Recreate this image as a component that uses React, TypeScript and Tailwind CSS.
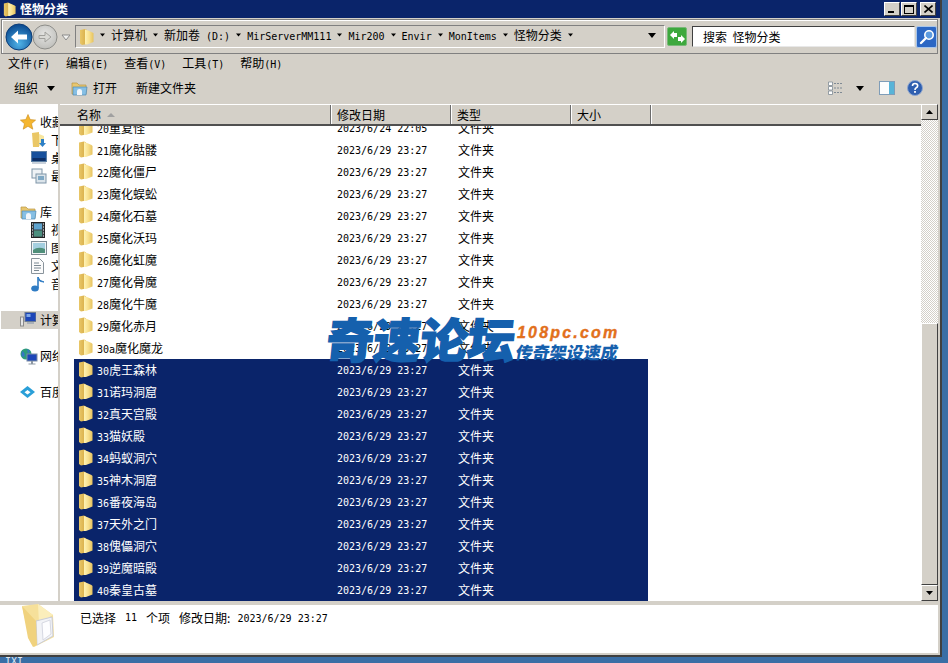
import React from "react";

const mono = "font-['DejaVu_Sans_Mono','Liberation_Mono',monospace] text-[10px]";

function T({ s }: { s: string }) {
  const parts = s.split(/([\x00-\x7f]+)/).filter(Boolean);
  return (
    <span className="whitespace-pre">
      {parts.map((p, i) =>
        /^[\x00-\x7f]+$/.test(p) ? (
          <span key={i} className={mono}>{p}</span>
        ) : (
          <span key={i}>{p}</span>
        )
      )}
    </span>
  );
}

function Folder({ w = 15, h = 17 }: { w?: number; h?: number }) {
  return (
    <svg width={w} height={h} viewBox="0 0 15 17" className="shrink-0">
      <defs>
        <linearGradient id="fg" x1="0" x2="1" y1="0" y2="0">
          <stop offset="0" stopColor="#fff3b4" />
          <stop offset="0.5" stopColor="#f8e08e" />
          <stop offset="1" stopColor="#e6c25e" />
        </linearGradient>
        <linearGradient id="fl" x1="0" x2="1" y1="0" y2="0">
          <stop offset="0" stopColor="#e9c768" />
          <stop offset="1" stopColor="#d6ab45" />
        </linearGradient>
      </defs>
      <path d="M1 1.5 L6 0.5 L8 1.5 L8 15.5 L3 16.5 L1 15 Z" fill="url(#fl)" />
      <path d="M6 1 L9 2 L13.5 4 L14.5 5 L14.5 13.5 L8 16 L6 16 Z" fill="url(#fg)" />
    </svg>
  );
}

function Arrow({ c = "#000" }: { c?: string }) {
  return (
    <svg width="5" height="4" viewBox="0 0 5 4" className="shrink-0">
      <path d="M0 0.5 H5 L2.5 3.5 Z" fill={c} />
    </svg>
  );
}

function Star() {
  return (
    <svg width="16" height="16" viewBox="0 0 16 16">
      <path d="M8 0.5 L10.2 5.6 L15.6 6.1 L11.5 9.7 L12.8 15.2 L8 12.3 L3.2 15.2 L4.5 9.7 L0.4 6.1 L5.8 5.6 Z" fill="#f5b62f" stroke="#c98a1a" strokeWidth="0.6" />
    </svg>
  );
}

function LibFolder() {
  return (
    <svg width="17" height="15" viewBox="0 0 17 15">
      <path d="M1 2 H6 L8 4 H15 V13 H1 Z" fill="#e8c66e" stroke="#b99642" strokeWidth="0.7" />
      <path d="M2 6 H16 L15 14 H2 Z" fill="#86bfe4" stroke="#4e89b5" strokeWidth="0.7" />
      <path d="M6 14 V10 Q6 8 8.5 8 Q11 8 11 10 V14" fill="#f2f6fa" />
    </svg>
  );
}

const sideIcons: Record<string, React.ReactNode> = {
  down: (
    <svg width="15" height="16" viewBox="0 0 15 16">
      <path d="M1 1 L8 0 V15 L2 15 Z" fill="#eac766" />
      <path d="M8 2 L13 4 V12 L8 14 Z" fill="#f7e6a0" />
      <path d="M10 7 H13 V11 H15 L11.5 15 L8 11 H10 Z" fill="#2d7fc6" />
    </svg>
  ),
  desk: (
    <svg width="16" height="14" viewBox="0 0 16 14">
      <rect x="0.5" y="0.5" width="15" height="10" fill="#17509c" stroke="#5c7fa3" />
      <rect x="1.5" y="7" width="13" height="3" fill="#0d2f66" />
      <rect x="1" y="11" width="14" height="2" fill="#c9d2dc" />
    </svg>
  ),
  recent: (
    <svg width="16" height="16" viewBox="0 0 16 16">
      <rect x="1" y="1" width="10" height="9" fill="#eef2f5" stroke="#7f95a8" />
      <rect x="5" y="6" width="10" height="9" fill="#dbe4ea" stroke="#7f95a8" />
      <rect x="7" y="8" width="6" height="4" fill="#7fa8c4" />
    </svg>
  ),
  video: (
    <svg width="14" height="16" viewBox="0 0 14 16">
      <rect x="0.5" y="0.5" width="13" height="15" fill="#3a4248" stroke="#222" />
      <rect x="3" y="1.5" width="8" height="6" fill="#5fa4cf" />
      <rect x="3" y="8.5" width="8" height="6" fill="#4b8f7e" />
      <path d="M1 2 H2 M1 5 H2 M1 8 H2 M1 11 H2 M1 14 H2 M12 2 H13 M12 5 H13 M12 8 H13 M12 11 H13 M12 14 H13" stroke="#fff" />
    </svg>
  ),
  pic: (
    <svg width="16" height="14" viewBox="0 0 16 14">
      <rect x="0.5" y="0.5" width="15" height="13" fill="#f1f4f6" stroke="#7d8b94" />
      <rect x="2" y="2" width="12" height="10" fill="#a4cfe0" />
      <path d="M2 9 Q7 5 14 8 V12 H2 Z" fill="#4f8f7a" />
    </svg>
  ),
  doc: (
    <svg width="13" height="16" viewBox="0 0 13 16">
      <path d="M0.5 0.5 H8.5 L12.5 4.5 V15.5 H0.5 Z" fill="#fbfbfb" stroke="#8a949c" />
      <path d="M3 5 H8 M3 7.5 H10 M3 10 H10 M3 12.5 H8" stroke="#7b8892" />
    </svg>
  ),
  music: (
    <svg width="14" height="16" viewBox="0 0 14 16">
      <path d="M7 1 V12" stroke="#2f7cc4" strokeWidth="1.6" />
      <path d="M7 1 Q8 5 13 6 Q9 6 7.5 4" fill="#2f7cc4" stroke="#2f7cc4" />
      <ellipse cx="4" cy="12.5" rx="3.8" ry="3" fill="#2f7cc4" />
    </svg>
  ),
  pc: (
    <svg width="16" height="16" viewBox="0 0 16 16">
      <rect x="0.5" y="5" width="3" height="9" fill="#e5e5e5" stroke="#8b8b8b" />
      <rect x="5" y="0.5" width="11" height="9" fill="#1d46b8" stroke="#6e7d93" />
      <rect x="6.5" y="2" width="4" height="3" fill="#7fa7e8" />
      <rect x="7" y="10" width="7" height="2" fill="#a9b0b8" />
    </svg>
  ),
  net: (
    <svg width="18" height="17" viewBox="0 0 18 17">
      <circle cx="6" cy="6" r="5.5" fill="#2d9b7a" />
      <path d="M2 3 Q6 5 4 9 L1.5 8 Z M7 1 L10 3 L8 6 Z" fill="#3577c4" />
      <rect x="7" y="6" width="10" height="7" fill="#1d46b8" stroke="#7a8ca3" />
      <rect x="11" y="13" width="2" height="3" fill="#8c97a3" />
      <rect x="8.5" y="15.5" width="7" height="1" fill="#8c97a3" />
    </svg>
  ),
  baidu: (
    <svg width="15" height="12" viewBox="0 0 15 12">
      <path d="M7.5 0 L15 6 L7.5 12 L0 6 Z" fill="#2a9fd8" />
      <path d="M7.5 4 L10.5 6.3 L7.5 8.5 L4.5 6.3 Z" fill="#fff" />
    </svg>
  ),
};

const sideRows: (null | { icon: React.ReactNode; label: string; sub?: boolean; active?: boolean })[] = [
  { icon: <Star />, label: "收藏夹" },
  { icon: sideIcons.down, label: "下载", sub: true },
  { icon: sideIcons.desk, label: "桌面", sub: true },
  { icon: sideIcons.recent, label: "最近访问的位置", sub: true },
  null,
  { icon: <LibFolder />, label: "库" },
  { icon: sideIcons.video, label: "视频", sub: true },
  { icon: sideIcons.pic, label: "图片", sub: true },
  { icon: sideIcons.doc, label: "文档", sub: true },
  { icon: sideIcons.music, label: "音乐", sub: true },
  null,
  { icon: sideIcons.pc, label: "计算机", active: true },
  null,
  { icon: sideIcons.net, label: "网络" },
  null,
  { icon: sideIcons.baidu, label: "百度网盘" },
];

const rows = [
  ["20重复怪", "2023/6/24 22:05"],
  ["21魔化骷髅"],
  ["22魔化僵尸"],
  ["23魔化蜈蚣"],
  ["24魔化石墓"],
  ["25魔化沃玛"],
  ["26魔化虹魔"],
  ["27魔化骨魔"],
  ["28魔化牛魔"],
  ["29魔化赤月"],
  ["30a魔化魔龙"],
  ["30虎王森林"],
  ["31诺玛洞窟"],
  ["32真天宫殿"],
  ["33猫妖殿"],
  ["34蚂蚁洞穴"],
  ["35神木洞窟"],
  ["36番夜海岛"],
  ["37天外之门"],
  ["38傀儡洞穴"],
  ["39逆魔暗殿"],
  ["40秦皇古墓"],
];

const crumbs = ["计算机", "新加卷", "(D:)", "MirServerMM111", "Mir200", "Envir", "MonItems", "怪物分类"];

function WinBtn({ children }: { children: React.ReactNode }) {
  return (
    <div className="w-[16px] h-[14px] bg-[#d4d0c8] border-t border-l border-t-white border-l-white border-r border-b border-r-[#404040] border-b-[#404040] flex items-center justify-center">
      {children}
    </div>
  );
}

function HeadCell({ w, children }: { w: string; children: React.ReactNode }) {
  return (
    <div className={`${w} shrink-0 h-full flex items-center border-r border-r-[#6b6b6b] shadow-[1px_0_0_#fff]`}>
      {children}
    </div>
  );
}

function ScrollBtn({ up }: { up?: boolean }) {
  return (
    <div className="h-[16px] shrink-0 bg-[#d4d0c8] border-t border-l border-t-white border-l-white border-r border-b border-r-[#404040] border-b-[#404040] flex items-center justify-center">
      <svg width="7" height="4" viewBox="0 0 7 4">
        <path d={up ? "M3.5 0 L7 4 H0 Z" : "M0 0 H7 L3.5 4 Z"} fill="#000" />
      </svg>
    </div>
  );
}

export default function App() {
  return (
    <div className="relative w-[948px] h-[663px] overflow-hidden bg-[#3a6ea5] text-[12px] leading-none text-black font-['Noto_Sans_CJK_SC','Liberation_Sans',sans-serif]">
      <div className="w-[942px] h-[657px] flex flex-col bg-[#d4d0c8] border-r-2 border-b-2 border-r-[#404040] border-b-[#404040]">
        {/* title bar */}
        <div className="h-[18px] shrink-0 bg-[#0a246a] flex items-center pl-[3px] pr-[4px]">
          <Folder w={13} h={15} />
          <span className="ml-[4px] text-white font-bold">怪物分类</span>
          <div className="ml-auto flex items-center gap-[1px]">
            <WinBtn>
              <div className="w-[6px] h-[2px] bg-black mt-[6px] -ml-[3px]" />
            </WinBtn>
            <WinBtn>
              <div className="w-[10px] h-[9px] border border-black border-t-2" />
            </WinBtn>
            <div className="w-[1px]" />
            <WinBtn>
              <svg width="9" height="8" viewBox="0 0 9 8">
                <path d="M0.5 0.5 L8.5 7.5 M8.5 0.5 L0.5 7.5" stroke="#000" strokeWidth="1.6" />
              </svg>
            </WinBtn>
          </div>
        </div>

        <div className="w-[940px] flex-1 flex flex-col min-h-0 pr-[2px]">
          {/* address row */}
          <div className="h-[35px] shrink-0 mt-[1px] ml-[1px] border border-[#808080] shadow-[inset_1px_1px_0_#fff] flex items-center pl-[3px]">
            <svg width="68" height="30" viewBox="0 0 68 30" className="shrink-0">
              <defs>
                <radialGradient id="bb" cx="0.5" cy="0.75" r="0.7">
                  <stop offset="0" stopColor="#4fb3e8" />
                  <stop offset="1" stopColor="#0c4d93" />
                </radialGradient>
                <radialGradient id="gb" cx="0.5" cy="0.4" r="0.7">
                  <stop offset="0" stopColor="#e6e6e4" />
                  <stop offset="1" stopColor="#b8b8b4" />
                </radialGradient>
              </defs>
              <circle cx="40" cy="15" r="12" fill="url(#gb)" stroke="#8e8e8a" />
              <path d="M34 13.5 H40 V10 L46 15 L40 20 V16.5 H34 Z" fill="#d9d9d5" stroke="#a0a09c" />
              <circle cx="14" cy="15" r="13" fill="url(#bb)" stroke="#0c3d78" />
              <path d="M6 15 L13 8.5 V12.5 H22 V17.5 H13 V21.5 Z" fill="#fff" />
              <path d="M57 13 H65 L61 18 Z" fill="#f2f2f0" stroke="#8b8b8b" />
            </svg>
            <div className="ml-[2px] w-[590px] h-[23px] border border-[#808080] border-b-white border-r-white flex items-center pl-[3px]">
              <Folder w={15} h={18} />
              <div className="ml-[6px] mb-[3px] flex items-center gap-[6px] flex-1">
                <Arrow />
                {crumbs.map((c) => (
                  <React.Fragment key={c}>
                    <T s={c} />
                    {c !== "新加卷" && <Arrow />}
                  </React.Fragment>
                ))}
                <div className="ml-auto mr-[8px]">
                  <svg width="8" height="5" viewBox="0 0 8 5">
                    <path d="M0 0 H8 L4 5 Z" fill="#000" />
                  </svg>
                </div>
              </div>
            </div>
            <div className="ml-[2px] w-[20px] h-[19px] rounded-[2px] bg-[#3da83d] border border-[#78b878] flex items-center justify-center">
              <svg width="15" height="12" viewBox="0 0 15 12">
                <path d="M0 4 L4 0 V2 H7 V6 H4 V8 Z" fill="#fff" />
                <path d="M15 8 L11 12 V10 H8 V6 H11 V4 Z" fill="#fff" />
              </svg>
            </div>
            <div className="ml-[5px] w-[223px] h-[21px] bg-white border border-t-[#404040] border-l-[#404040] border-r-[#e8e8e8] border-b-[#e8e8e8] flex items-center pl-[10px]">
              <span className="whitespace-pre">搜索  怪物分类</span>
            </div>
            <div className="ml-[1px] w-[21px] h-[22px] rounded-[2px] bg-[#2c67c4] border border-[#a9c6ea] flex items-center justify-center">
              <svg width="16" height="16" viewBox="0 0 16 16">
                <circle cx="10" cy="6" r="4.2" fill="#5d9be0" stroke="#fff" strokeWidth="1.6" />
                <path d="M7 9 L2 14" stroke="#fff" strokeWidth="2.4" strokeLinecap="round" />
              </svg>
            </div>
          </div>

          {/* menu */}
          <div className="h-[21px] -mt-[1px] shrink-0 flex items-center pl-[8px] gap-[16px]">
            {["文件(F)", "编辑(E)", "查看(V)", "工具(T)", "帮助(H)"].map((m) => (
              <T key={m} s={m} />
            ))}
          </div>

          {/* toolbar */}
          <div className="h-[28px] mb-[2px] shrink-0 flex items-center pl-[14px]">
            <span>组织</span>
            <div className="ml-[9px]">
              <svg width="8" height="5" viewBox="0 0 8 5"><path d="M0 0 H8 L4 5 Z" fill="#000" /></svg>
            </div>
            <div className="ml-[16px]"><LibFolder /></div>
            <span className="ml-[5px]">打开</span>
            <span className="ml-[19px]">新建文件夹</span>
            <div className="ml-auto flex items-center">
              <svg width="15" height="14" viewBox="0 0 15 14">
                <path d="M0.5 1 H4.5 V4.5 H0.5 Z M0.5 5.5 H4.5 V9 H0.5 Z M0.5 10 H4.5 V13.5 H0.5 Z" fill="#fff" stroke="#7f8a94" strokeWidth="0.8" />
                <path d="M6 2.5 H15 M6 7 H15 M6 11.5 H15" stroke="#7f8a94" strokeDasharray="2 1" />
              </svg>
              <div className="ml-[13px]">
                <svg width="8" height="5" viewBox="0 0 8 5"><path d="M0 0 H8 L4 5 Z" fill="#000" /></svg>
              </div>
              <div className="ml-[15px]">
                <svg width="16" height="14" viewBox="0 0 16 14">
                  <rect x="0.5" y="0.5" width="15" height="13" fill="#fdfdfd" stroke="#7f9db8" />
                  <rect x="10" y="1" width="5" height="12" fill="#58b4d8" />
                </svg>
              </div>
              <div className="ml-[12px] mr-[15px]">
                <svg width="16" height="16" viewBox="0 0 16 16">
                  <circle cx="8" cy="8" r="7.5" fill="#2f5fb0" stroke="#8ea6cf" />
                  <path d="M5.5 6 Q5.5 3.5 8 3.5 Q10.7 3.5 10.7 5.8 Q10.7 7.2 9 8 Q8 8.5 8 10" fill="none" stroke="#fff" strokeWidth="1.6" />
                  <rect x="7.1" y="11" width="1.8" height="1.8" fill="#fff" />
                </svg>
              </div>
            </div>
          </div>

          {/* main */}
          <div className="h-[497px] shrink-0 flex overflow-hidden">
            <div className="w-[58px] shrink-0 bg-white pt-[9px] overflow-hidden">
              {sideRows.map((r, i) =>
                r ? (
                  <div
                    key={i}
                    className={`h-[18px] w-[57px] ml-[1px] flex items-center overflow-hidden whitespace-nowrap ${r.active ? "bg-[#d4d0c8]" : ""}`}
                  >
                    <div className={`${r.sub ? "w-[30px] pl-[30px]" : "w-[19px] pl-[19px]"} shrink-0 h-full`} />
                    <div className={`${r.sub ? "w-[20px]" : "w-[20px]"} shrink-0 flex items-center`}>{r.icon}</div>
                    <span>{r.label}</span>
                  </div>
                ) : (
                  <div key={i} className="h-[18px]" />
                )
              )}
            </div>
            <div className="w-[2px] shrink-0 bg-[#d4d0c8]" />
            <div className="flex-1 min-w-0 flex flex-col bg-white">
              {/* header */}
              <div className="h-[22px] shrink-0 bg-[#d4d0c8] border-t border-t-white border-b-2 border-b-[#505050] flex items-center z-10">
                <HeadCell w="w-[271px]">
                  <span className="ml-[17px]">名称</span>
                  <svg width="8" height="4" viewBox="0 0 8 4" className="ml-[6px]"><path d="M4 0 L8 4 H0 Z" fill="#a0a0a0" /></svg>
                </HeadCell>
                <HeadCell w="w-[120px]"><span className="ml-[6px]">修改日期</span></HeadCell>
                <HeadCell w="w-[120px]"><span className="ml-[6px]">类型</span></HeadCell>
                <HeadCell w="w-[80px]"><span className="ml-[6px]">大小</span></HeadCell>
              </div>
              {/* rows */}
              <div className="flex-1 min-h-0 overflow-hidden">
                <div className="-mt-[9px] ml-[14px] w-[574px]">
                  {rows.map((r, i) => {
                    const sel = i >= 11;
                    return (
                      <div key={r[0]} className={`h-[22px] flex items-center ${sel ? "bg-[#0a246a] text-white" : ""}`}>
                        <div className="w-[4px] shrink-0" />
                        <div className="-mt-[1px] shrink-0 flex"><Folder /></div>
                        <div className="ml-[4px] w-[240px] shrink-0 pt-[1px]"><T s={r[0]} /></div>
                        <span className={`${mono} w-[121px] shrink-0 pt-[1px]`}>{r[1] ?? "2023/6/29 23:27"}</span>
                        <span>文件夹</span>
                      </div>
                    );
                  })}
                </div>
              </div>
            </div>
            {/* scrollbar */}
            <div className="w-[17px] shrink-0 flex flex-col bg-[repeating-conic-gradient(#d4d0c8_0_25%,#ffffff_0_50%)] bg-[length:2px_2px]">
              <ScrollBtn up />
              <div className="h-[203px] shrink-0" />
              <div className="flex-1 bg-[#d4d0c8] border-t border-l border-t-white border-l-white border-r border-b border-r-[#404040] border-b-[#404040]" />
              <ScrollBtn />
            </div>
          </div>

          {/* details */}
          <div className="h-[48px] mt-[4px] shrink-0 bg-white flex items-start pl-[20px]">
            <svg width="36" height="47" viewBox="0 0 36 47" className="shrink-0 -mt-[2px]">
              <path d="M2 3 L18 1 L33 12 L34 34 L14 44 L10 38 Z" fill="#f6e09a" />
              <path d="M18 1 L33 12 L19 20 Z" fill="#fbeebb" />
              <path d="M16 18 L32 14 L33 33 L17 42 Z" fill="#f2f3f7" stroke="#c9ccd8" />
              <path d="M22 20 L30 17 L31 31 L23 37 Z" fill="#fdfdff" stroke="#d6d8e2" />
              <path d="M2 3 L16 18 L17 42 L13 44 L8 35 Z" fill="#f0d27e" />
            </svg>
            <div className="ml-[24px] mt-[6px] flex items-center h-[14px] whitespace-pre">
              <span>已选择</span>
              <span className={`${mono} ml-[9px]`}>11</span>
              <span className="ml-[9px]">个项</span>
              <span className="ml-[9px]">修改日期:</span>
              <span className={`${mono} ml-[7px] pt-[1px]`}>2023/6/29 23:27</span>
            </div>
          </div>
        </div>
      </div>

      <div className={`absolute left-[5px] top-[657px] text-[#dfe7f2] ${mono} leading-none`}>IXI</div>

      {/* watermark */}
      <div className="absolute left-[327px] top-[312px] h-[52px] w-[300px] pointer-events-none">
        <div className="absolute left-0 top-0 text-[47px] leading-[52px] font-black whitespace-nowrap text-[#1560ad] [-webkit-text-stroke:1.5px_#1560ad] skew-x-[-6deg]">
          奇速论坛
        </div>
        <div className="absolute left-[190px] top-[13px] text-[16px] leading-none font-bold italic tracking-[2.2px] whitespace-nowrap text-[#e2701c] [-webkit-text-stroke:0.4px_#e2701c] font-['Liberation_Sans',sans-serif]">
          108pc.com
        </div>
        <div className="absolute left-[189px] top-[31px] text-[17px] leading-none font-black whitespace-nowrap text-[#1560ad] skew-x-[-10deg]">
          传奇架设速成
        </div>
      </div>
    </div>
  );
}
